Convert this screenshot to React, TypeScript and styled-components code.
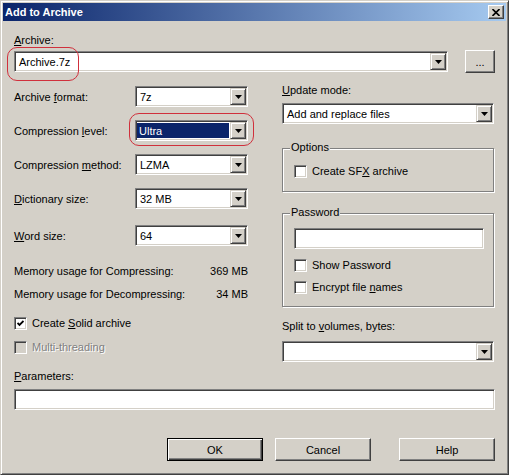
import styled, { createGlobalStyle } from "styled-components";

const GlobalStyle = createGlobalStyle`
  html, body {
    margin: 0;
    padding: 0;
    background: #d4d0c8;
  }
  body {
    font-family: "Liberation Sans", Arial, sans-serif;
    font-size: 11px;
    color: #000;
  }
`;

const Window = styled.div`
  width: 509px;
  height: 475px;
  box-sizing: border-box;
  background: #d4d0c8;
  border: 1px solid;
  border-color: #d4d0c8 #404040 #404040 #d4d0c8;
  box-shadow: inset 1px 1px 0 #fff, inset -1px -1px 0 #808080;
  padding: 2px;
  display: flex;
  flex-direction: column;
`;

const TitleBar = styled.div`
  height: 18px;
  display: flex;
  align-items: center;
  padding-left: 2px;
  background: linear-gradient(to right, #0a246a, #a6caf0);
  color: #fff;
  font-weight: bold;
  font-size: 11px;
`;

const CloseButton = styled.div`
  margin-left: auto;
  margin-right: 2px;
  width: 16px;
  height: 14px;
  box-sizing: border-box;
  background: #d4d0c8;
  border: 1px solid;
  border-color: #fff #404040 #404040 #fff;
  box-shadow: inset -1px -1px 0 #808080;
  display: flex;
  align-items: center;
  justify-content: center;
`;

const Body = styled.div`
  padding: 0 11px;
  display: flex;
  flex-direction: column;
`;

const Label = styled.div<{ $mt?: number }>`
  line-height: 13px;
  height: 13px;
  white-space: nowrap;
  margin-top: ${(p) => p.$mt ?? 0}px;
`;

const ArchiveRow = styled.div`
  margin-top: 3px;
  height: 23px;
  display: flex;
  align-items: center;
`;

const Combo = styled.div<{ $w?: number; $mt?: number }>`
  position: relative;
  box-sizing: border-box;
  height: 21px;
  width: ${(p) => (p.$w ? `${p.$w}px` : "auto")};
  flex: ${(p) => (p.$w ? "none" : "1 0 auto")};
  margin-top: ${(p) => p.$mt ?? 0}px;
  background: #fff;
  border: 1px solid;
  border-color: #808080 #fff #fff #808080;
  box-shadow: inset 1px 1px 0 #404040, inset -1px -1px 0 #d4d0c8;
  padding: 1px;
  display: flex;
  align-items: stretch;
`;

const ComboText = styled.div<{ $selected?: boolean }>`
  flex: 1;
  display: flex;
  align-items: center;
  white-space: nowrap;
  padding-left: ${(p) => (p.$selected ? 2 : 3)}px;
  margin: ${(p) => (p.$selected ? "1px 1px 1px 0" : "0")};
  background: ${(p) => (p.$selected ? "#0a246a" : "transparent")};
  color: ${(p) => (p.$selected ? "#fff" : "#000")};
`;

const DropButton = styled.div`
  width: 16px;
  box-sizing: border-box;
  background: #d4d0c8;
  border: 1px solid;
  border-color: #d4d0c8 #404040 #404040 #d4d0c8;
  box-shadow: inset 1px 1px 0 #fff, inset -1px -1px 0 #808080;
  display: flex;
  align-items: center;
  justify-content: center;
`;

const TextField = styled.div<{ $mt?: number }>`
  box-sizing: border-box;
  height: 21px;
  flex: none;
  margin-top: ${(p) => p.$mt ?? 0}px;
  background: #fff;
  border: 1px solid;
  border-color: #808080 #fff #fff #808080;
  box-shadow: inset 1px 1px 0 #404040, inset -1px -1px 0 #d4d0c8;
`;

const Button = styled.div<{ $default?: boolean; $w: number; $ml?: number }>`
  width: ${(p) => p.$w}px;
  height: 23px;
  margin-left: ${(p) => p.$ml ?? 0}px;
  box-sizing: border-box;
  background: #d4d0c8;
  border: 1px solid;
  border-color: ${(p) => (p.$default ? "#000" : "#fff #404040 #404040 #fff")};
  box-shadow: ${(p) =>
    p.$default
      ? "inset 1px 1px 0 #fff, inset -1px -1px 0 #404040, inset -2px -2px 0 #808080"
      : "inset -1px -1px 0 #808080"};
  display: flex;
  align-items: center;
  justify-content: center;
  flex: none;
`;

const Columns = styled.div`
  margin-top: 11px;
  display: flex;
  align-items: flex-start;
`;

const LeftCol = styled.div`
  width: 234px;
  display: flex;
  flex-direction: column;
`;

const RightCol = styled.div`
  width: 212px;
  margin-left: 34px;
  display: flex;
  flex-direction: column;
`;

const FieldRow = styled.div<{ $mt: number }>`
  display: flex;
  align-items: center;
  height: 21px;
  margin-top: ${(p) => p.$mt}px;
`;

const FieldLabel = styled.div`
  width: 121px;
  flex: none;
  white-space: nowrap;
`;

const MemoryRow = styled.div<{ $mt: number }>`
  display: flex;
  justify-content: space-between;
  line-height: 13px;
  height: 13px;
  margin-top: ${(p) => p.$mt}px;
`;

const CheckRow = styled.div<{ $mt?: number; $disabled?: boolean }>`
  display: flex;
  align-items: center;
  height: 13px;
  flex: none;
  margin-top: ${(p) => p.$mt ?? 0}px;
  color: ${(p) => (p.$disabled ? "#808080" : "#000")};
  text-shadow: ${(p) => (p.$disabled ? "1px 1px 0 #fff" : "none")};
  white-space: nowrap;
`;

const CheckBox = styled.div<{ $disabled?: boolean }>`
  width: 13px;
  height: 13px;
  box-sizing: border-box;
  flex: none;
  background: ${(p) => (p.$disabled ? "#d4d0c8" : "#fff")};
  border: 1px solid;
  border-color: #808080 #fff #fff #808080;
  box-shadow: inset 1px 1px 0 #404040, inset -1px -1px 0 #d4d0c8;
  display: flex;
  align-items: center;
  justify-content: center;
`;

const CheckText = styled.span`
  margin-left: 5px;
  line-height: 13px;
`;

const Group = styled.div<{ $mt: number; $pad: string }>`
  position: relative;
  margin-top: ${(p) => p.$mt}px;
  padding: ${(p) => p.$pad};
  border: 1px solid #808080;
  box-shadow: inset 1px 1px 0 #fff, 1px 1px 0 #fff;
  display: flex;
  flex-direction: column;
`;

const Legend = styled.span`
  position: absolute;
  top: -8px;
  left: 7px;
  padding: 0 1px;
  line-height: 13px;
  background: #d4d0c8;
`;

const RedMark = styled.span<{ $l: number; $t: number; $w: number; $h: number }>`
  position: absolute;
  left: ${(p) => p.$l}px;
  top: ${(p) => p.$t}px;
  width: ${(p) => p.$w}px;
  height: ${(p) => p.$h}px;
  box-sizing: border-box;
  border: 1.5px solid #d0303c;
  border-radius: 10px;
  pointer-events: none;
`;

const ButtonRow = styled.div`
  margin-top: 28px;
  display: flex;
  justify-content: flex-end;
`;

const Arrow = () => (
  <svg width="7" height="4" viewBox="0 0 7 4">
    <polygon points="0,0 7,0 3.5,4" fill="#000" />
  </svg>
);

const CheckMark = () => (
  <svg width="7" height="7" viewBox="0 0 7 7">
    <polyline points="0.5,3 2.5,5 6.5,1" fill="none" stroke="#000" strokeWidth="1.8" />
  </svg>
);

interface IComboProps {
  value?: string;
  w?: number;
  mt?: number;
  selected?: boolean;
  children?: React.ReactNode;
}

function ComboBox({ value, w, mt, selected, children }: IComboProps) {
  return (
    <Combo $w={w} $mt={mt}>
      <ComboText $selected={selected}>{value}</ComboText>
      <DropButton>
        <Arrow />
      </DropButton>
      {children}
    </Combo>
  );
}

interface ICheckProps {
  checked?: boolean;
  disabled?: boolean;
  mt?: number;
  children: React.ReactNode;
}

function Check({ checked, disabled, mt, children }: ICheckProps) {
  return (
    <CheckRow $mt={mt} $disabled={disabled}>
      <CheckBox $disabled={disabled}>{checked && <CheckMark />}</CheckBox>
      <CheckText>{children}</CheckText>
    </CheckRow>
  );
}

const fields = [
  { label: <>Archive <u>f</u>ormat:</>, value: "7z", mt: 2 },
  { label: <>Compression <u>l</u>evel:</>, value: "Ultra", mt: 13, selected: true, mark: true },
  { label: <>Compression <u>m</u>ethod:</>, value: "LZMA", mt: 13 },
  { label: <><u>D</u>ictionary size:</>, value: "32 MB", mt: 13 },
  { label: <><u>W</u>ord size:</>, value: "64", mt: 16 },
];

function App() {
  return (
    <>
      <GlobalStyle />
      <Window>
        <TitleBar>
          Add to Archive
          <CloseButton>
            <svg width="8" height="7" viewBox="0 0 8 7">
              <path d="M0.5 0 L7.5 7 M7.5 0 L0.5 7" stroke="#000" strokeWidth="1.6" />
            </svg>
          </CloseButton>
        </TitleBar>
        <Body>
          <Label $mt={13}>
            <u>A</u>rchive:
          </Label>
          <ArchiveRow>
            <ComboBox value="Archive.7z">
              <RedMark $l={-8} $t={-5} $w={72} $h={34} />
            </ComboBox>
            <Button $w={30} $ml={17}>
              ...
            </Button>
          </ArchiveRow>
          <Columns>
            <LeftCol>
              {fields.map((f, i) => (
                <FieldRow key={i} $mt={f.mt}>
                  <FieldLabel>{f.label}</FieldLabel>
                  <ComboBox value={f.value} w={113} selected={f.selected}>
                    {f.mark && <RedMark $l={-7} $t={-8} $w={125} $h={33} />}
                  </ComboBox>
                </FieldRow>
              ))}
              <MemoryRow $mt={19}>
                <span>Memory usage for Compressing:</span>
                <span>369 MB</span>
              </MemoryRow>
              <MemoryRow $mt={10}>
                <span>Memory usage for Decompressing:</span>
                <span>34 MB</span>
              </MemoryRow>
              <Check checked mt={16}>
                Create <u>S</u>olid archive
              </Check>
              <Check disabled mt={11}>
                Multi-threading
              </Check>
            </LeftCol>
            <RightCol>
              <Label>
                <u>U</u>pdate mode:
              </Label>
              <ComboBox value="Add and replace files" mt={6} />
              <Group $mt={24} $pad="16px 9px 13px 11px">
                <Legend>Options</Legend>
                <Check>
                  Create SF<u>X</u> archive
                </Check>
              </Group>
              <Group $mt={21} $pad="14px 9px 12px 11px">
                <Legend>Password</Legend>
                <TextField />
                <Check mt={10}>Show Password</Check>
                <Check mt={9}>
                  Encrypt file <u>n</u>ames
                </Check>
              </Group>
              <Label $mt={13}>
                Split to <u>v</u>olumes, bytes:
              </Label>
              <ComboBox mt={8} />
            </RightCol>
          </Columns>
          <Label $mt={8}>
            <u>P</u>arameters:
          </Label>
          <TextField $mt={6} />
          <ButtonRow>
            <Button $w={96} $default>
              OK
            </Button>
            <Button $w={96} $ml={12}>
              Cancel
            </Button>
            <Button $w={96} $ml={28}>
              Help
            </Button>
          </ButtonRow>
        </Body>
      </Window>
    </>
  );
}

export default App;
